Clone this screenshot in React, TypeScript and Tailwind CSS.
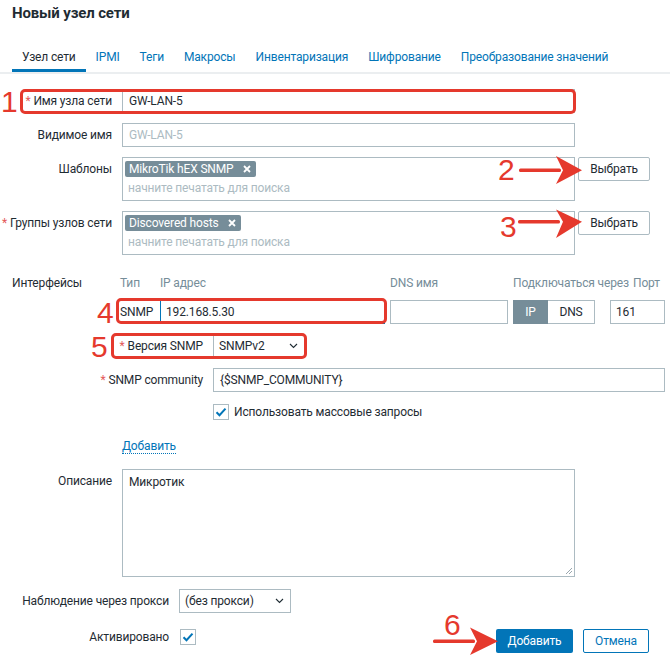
import React from "react";

const tabs = [
  "Узел сети",
  "IPMI",
  "Теги",
  "Макросы",
  "Инвентаризация",
  "Шифрование",
  "Преобразование значений",
];

function Req() {
  return <span className="text-[#e45959] mr-[3px]">*</span>;
}

function Chevron() {
  return (
    <svg width="9" height="6" viewBox="0 0 9 6">
      <path d="M1 1l3.5 3.5L8 1" fill="none" stroke="#1f2c33" strokeWidth="1.1" />
    </svg>
  );
}

function Check() {
  return (
    <div className="w-[16px] h-[16px] shrink-0 border border-[#acbbc2] bg-white flex items-center justify-center">
      <svg width="12" height="10" viewBox="0 0 12 10">
        <path d="M1.5 5.2l3 3 6-6.6" fill="none" stroke="#0275b8" strokeWidth="2" />
      </svg>
    </div>
  );
}

function Tag({ text }: { text: string }) {
  return (
    <div className="inline-flex h-[16px] items-center bg-[#768d99] text-white rounded-[2px] pl-[4px] pr-[5px] leading-[16px]">
      <span>{text}</span>
      <svg className="ml-[9px]" width="8" height="8" viewBox="0 0 8 8">
        <path d="M1 1l6 6M7 1l-6 6" stroke="#fff" strokeWidth="1.8" />
      </svg>
    </div>
  );
}

function Row({ label, children }: { label: React.ReactNode; children: React.ReactNode }) {
  return (
    <div className="flex items-start">
      <div className="w-[112px] shrink-0 text-right leading-[24px] whitespace-nowrap">{label}</div>
      <div className="ml-[10px] flex items-start">{children}</div>
    </div>
  );
}

function SelectBtn() {
  return (
    <div className="ml-[3px] w-[72px] h-[24px] border border-[#acbbc2] rounded-[2px] text-center leading-[22px] bg-white">
      Выбрать
    </div>
  );
}

function Multi({ tag }: { tag: string }) {
  return (
    <div className="w-[453px] h-[44px] border border-[#acbbc2] pt-[3px] px-[2px]">
      <Tag text={tag} />
      <div className="mt-[3px] pl-[3px] leading-[16px] text-[#acbbc2]">начните печатать для поиска</div>
    </div>
  );
}

export default function App() {
  return (
    <div className="relative w-[670px] h-[658px] overflow-hidden bg-white font-[Roboto,sans-serif] text-[12px] leading-[14px] tracking-[-0.15px] text-[#1f2c33]">
      <h1 className="pl-[12px] pt-[4px] text-[15px] font-bold leading-[18px] text-[#1f2c33]">Новый узел сети</h1>

      <div className="mt-[21px] flex pl-[12px] border-b-2 border-[#ebeef0]">
        {tabs.map((t, i) =>
          i === 0 ? (
            <div key={t} className="px-[10px] pt-[7px] pb-[5px] border-b-[3px] border-[#0275b8] text-[#1f2c33] whitespace-nowrap">
              {t}
            </div>
          ) : (
            <div key={t} className="px-[10px] pt-[7px] pb-[5px] border-b-[3px] border-transparent text-[#0275b8] whitespace-nowrap">
              {t}
            </div>
          )
        )}
      </div>

      <div className="pt-[15px] flex flex-col">
        <Row
          label={
            <>
              <Req />
              Имя узла сети
            </>
          }
        >
          <div className="w-[453px] h-[24px] border border-[#acbbc2] pl-[6px] leading-[22px]">GW-LAN-5</div>
        </Row>

        <div className="mt-[10px]">
          <Row label="Видимое имя">
            <div className="w-[453px] h-[24px] border border-[#acbbc2] pl-[6px] leading-[22px] text-[#acbbc2]">GW-LAN-5</div>
          </Row>
        </div>

        <div className="mt-[10px]">
          <Row label="Шаблоны">
            <Multi tag="MikroTik hEX SNMP" />
            <SelectBtn />
          </Row>
        </div>

        <div className="mt-[10px]">
          <Row
            label={
              <>
                <Req />
                Группы узлов сети
              </>
            }
          >
            <Multi tag="Discovered hosts" />
            <SelectBtn />
          </Row>
        </div>

        {/* Interfaces header */}
        <div className="mt-[21px] flex leading-[14px] whitespace-nowrap">
          <div className="w-[120px] pl-[12px]">Интерфейсы</div>
          <div className="w-[40px] text-[#768d99]">Тип</div>
          <div className="w-[230px] text-[#768d99]">IP адрес</div>
          <div className="w-[123px] text-[#768d99]">DNS имя</div>
          <div className="w-[120px] text-[#768d99]">Подключаться через</div>
          <div className="text-[#768d99]">Порт</div>
        </div>

        <div className="mt-[10px] flex items-center h-[24px]">
          <div className="w-[120px]" />
          <div className="w-[40px]">SNMP</div>
          <div className="w-[225px] h-[24px] border border-[#0275b8] pl-[5px] leading-[22px]">192.168.5.30</div>
          <div className="ml-[5px] w-[118px] h-[24px] border border-[#acbbc2]" />
          <div className="ml-[5px] flex h-[24px]">
            <div className="w-[35px] h-[24px] bg-[#768d99] text-white text-center leading-[24px]">IP</div>
            <div className="w-[47px] h-[24px] border border-l-0 border-[#acbbc2] text-center leading-[22px]">DNS</div>
          </div>
          <div className="ml-[15px] w-[55px] h-[24px] border border-[#acbbc2] pl-[5px] leading-[22px]">161</div>
        </div>

        <div className="mt-[10px] flex items-start">
          <div className="w-[203px] text-right leading-[24px] whitespace-nowrap">
            <Req />
            Версия SNMP
          </div>
          <div className="ml-[10px] w-[92px] h-[24px] border border-[#acbbc2] flex items-center justify-between pl-[5px] pr-[6px]">
            <span>SNMPv2</span>
            <Chevron />
          </div>
        </div>

        <div className="mt-[10px] flex items-start">
          <div className="w-[203px] text-right leading-[24px] whitespace-nowrap">
            <Req />
            SNMP community
          </div>
          <div className="ml-[10px] w-[452px] h-[24px] border border-[#acbbc2] pl-[6px] leading-[22px]">{"{$SNMP_COMMUNITY}"}</div>
        </div>

        <div className="mt-[12px] flex items-center pl-[213px] h-[16px]">
          <Check />
          <span className="ml-[5px]">Использовать массовые запросы</span>
        </div>

        <div className="mt-[19px] pl-[122px] flex">
          <span className="text-[#0275b8] leading-[14px] border-b border-dotted border-[#0275b8]">Добавить</span>
        </div>

        <div className="mt-[15px]">
          <Row label="Описание">
            <div className="relative w-[453px] h-[108px] border border-[#acbbc2] pl-[6px] pt-[5px] leading-[14px]">
              Микротик
              <svg className="absolute right-[1px] bottom-[1px]" width="8" height="8" viewBox="0 0 8 8">
                <path d="M7 1L1 7M7 4L4 7" stroke="#9aa7ae" strokeWidth="1" />
              </svg>
            </div>
          </Row>
        </div>

        <div className="mt-[12px] flex items-start">
          <div className="w-[169px] text-right leading-[24px] whitespace-nowrap">Наблюдение через прокси</div>
          <div className="ml-[10px] w-[112px] h-[24px] border border-[#acbbc2] flex items-center justify-between pl-[5px] pr-[6px]">
            <span>(без прокси)</span>
            <Chevron />
          </div>
        </div>

        <div className="mt-[16px] flex items-start justify-between pr-[21px]">
          <div className="flex items-center h-[16px]">
            <div className="w-[169px] text-right leading-[16px]">Активировано</div>
            <div className="ml-[11px]">
              <Check />
            </div>
          </div>
          <div className="flex">
            <div className="w-[77px] h-[24px] bg-[#0275b8] text-white rounded-[2px] text-center leading-[24px]">Добавить</div>
            <div className="ml-[10px] w-[66px] h-[24px] border border-[#0275b8] text-[#0275b8] rounded-[2px] text-center leading-[22px]">Отмена</div>
          </div>
        </div>
      </div>

      {/* Annotation overlays */}
      <div className="absolute left-[20px] top-[89px] w-[556px] h-[25px] border-[3px] border-[#e5392d] rounded-[5px] pointer-events-none" />
      <div className="absolute left-[116px] top-[298px] w-[271px] h-[26px] border-[3px] border-[#e5392d] rounded-[5px] pointer-events-none" />
      <div className="absolute left-[111px] top-[333px] w-[196px] h-[26px] border-[3px] border-[#e5392d] rounded-[5px] pointer-events-none" />

      <span className="absolute left-[1px] top-[87px] text-[30px] leading-[30px] tracking-normal text-[#e5392d] font-['Liberation_Sans',Arial,sans-serif]">1</span>
      <span className="absolute left-[498px] top-[155px] text-[30px] leading-[30px] tracking-normal text-[#e5392d] font-['Liberation_Sans',Arial,sans-serif]">2</span>
      <span className="absolute left-[500px] top-[212px] text-[30px] leading-[30px] tracking-normal text-[#e5392d] font-['Liberation_Sans',Arial,sans-serif]">3</span>
      <span className="absolute left-[97px] top-[298px] text-[30px] leading-[30px] tracking-normal text-[#e5392d] font-['Liberation_Sans',Arial,sans-serif]">4</span>
      <span className="absolute left-[91px] top-[332px] text-[30px] leading-[30px] tracking-normal text-[#e5392d] font-['Liberation_Sans',Arial,sans-serif]">5</span>
      <span className="absolute left-[444px] top-[610px] text-[30px] leading-[30px] tracking-normal text-[#e5392d] font-['Liberation_Sans',Arial,sans-serif]">6</span>

      <svg className="absolute left-0 top-0 pointer-events-none" width="670" height="658" viewBox="0 0 670 658">
        <g fill="#e5392d" stroke="none">
          <rect x="519" y="168.5" width="42" height="3.5" rx="1.5" />
          <path d="M556 156L582 170.2L556 184L563 170.2Z" />
          <rect x="518" y="220" width="42" height="3.5" rx="1.5" />
          <path d="M556 209.5L582 221.8L556 238L563 221.8Z" />
          <rect x="433" y="639.5" width="42" height="3.5" rx="1.5" />
          <path d="M470 627.5L498 641.2L470 655L477 641.2Z" />
        </g>
      </svg>
    </div>
  );
}
